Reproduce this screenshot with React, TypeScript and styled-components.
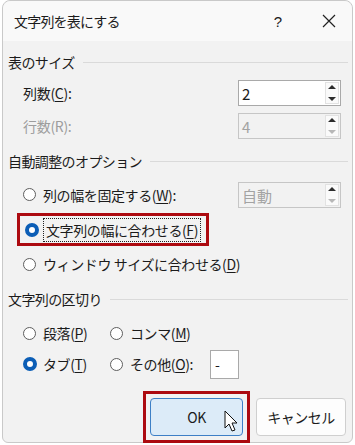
import React from "react";
import styled, { createGlobalStyle } from "styled-components";

const Global = createGlobalStyle`
  html, body { margin: 0; padding: 0; background: #ffffff; }
  body { font-family: "Noto Sans CJK JP", "Noto Sans", sans-serif; color: #1b1b1b; }
`;

const Dialog = styled.div`
  position: relative;
  box-sizing: border-box;
  margin-left: 2px;
  width: 351px;
  height: 443px;
  background: #f2f2f2;
  border: 1px solid #c9c9c9;
  border-radius: 8px 8px 6px 6px;
  display: flex;
  flex-direction: column;
`;

const TitleBar = styled.div`
  height: 40px;
  flex: none;
  display: flex;
  align-items: center;
  background: #f9f9f9;
  border-radius: 8px 8px 0 0;
  padding-left: 11px;
  font-size: 14px;
`;

const Title = styled.div`
  flex: 1;
  letter-spacing: -0.8px;
`;

const TitleButton = styled.div<{ $w: number }>`
  width: ${(p) => p.$w}px;
  height: 40px;
  display: flex;
  align-items: center;
  justify-content: center;
  font-size: 15px;
  font-family: "Liberation Sans", sans-serif;
`;

const Body = styled.div`
  padding: 0 4px 0 5px;
  display: flex;
  flex-direction: column;
`;

const Header = styled.div<{ $mt: number }>`
  margin-top: ${(p) => p.$mt}px;
  height: 22px;
  display: flex;
  align-items: center;
  font-size: 14px;
  letter-spacing: -0.6px;
  &::after {
    content: "";
    flex: 1;
    height: 1px;
    background: #dadada;
    margin-left: 8px;
  }
`;

const Row = styled.div<{ $mt: number; $h?: number; $pl?: number }>`
  margin-top: ${(p) => p.$mt}px;
  height: ${(p) => p.$h ?? 26}px;
  display: flex;
  align-items: center;
  padding-left: ${(p) => p.$pl ?? 0}px;
  padding-right: 7px;
  font-size: 14px;
`;

const Label = styled.span<{ $disabled?: boolean }>`
  flex: 1;
  color: ${(p) => (p.$disabled ? "#9d9d9d" : "#1b1b1b")};
  letter-spacing: -0.3px;
`;

const U = styled.span`
  text-decoration: underline;
  text-underline-offset: 2px;
`;

const Spin = styled.div<{ $disabled?: boolean }>`
  box-sizing: border-box;
  width: 103px;
  height: 26px;
  border: 1px solid ${(p) => (p.$disabled ? "#c6c6c6" : "#a9a9a9")};
  background: ${(p) => (p.$disabled ? "#f2f2f2" : "#ffffff")};
  display: flex;
  align-items: center;
  padding-left: 3px;
  font-size: 15px;
  color: ${(p) => (p.$disabled ? "#a3a3a3" : "#1b1b1b")};
`;

const SpinValue = styled.span`
  flex: 1;
`;

const Arrows = styled.div`
  width: 14px;
  height: 22px;
  margin-right: 1px;
  display: flex;
  flex-direction: column;
  align-items: center;
  justify-content: space-between;
  padding: 2px 0;
  box-sizing: border-box;
  border: 1px solid #e2e2e2;
  background: #fafafa;
`;

const Tri = styled.div<{ $down?: boolean; $dim?: boolean }>`
  width: 0;
  height: 0;
  border-left: 4px solid transparent;
  border-right: 4px solid transparent;
  ${(p) =>
    p.$down
      ? `border-top: 4px solid ${p.$dim ? "#b7b7b7" : "#2c2c2c"};`
      : `border-bottom: 4px solid ${p.$dim ? "#b7b7b7" : "#2c2c2c"};`}
`;

const RadioWrap = styled.span<{ $w?: number }>`
  display: inline-flex;
  align-items: center;
  width: ${(p) => (p.$w ? `${p.$w}px` : "auto")};
  flex: none;
  letter-spacing: -0.4px;
`;

const RadioDot = styled.span<{ $on?: boolean }>`
  box-sizing: border-box;
  width: ${(p) => (p.$on ? 14 : 13)}px;
  height: ${(p) => (p.$on ? 14 : 13)}px;
  border-radius: 50%;
  margin-right: ${(p) => (p.$on ? 6 : 7)}px;
  flex: none;
  border: ${(p) => (p.$on ? "4.5px solid #0c5eb6" : "1px solid #5e5e5e")};
  background: #ffffff;
`;

const Focus = styled.span`
  outline: 1px dotted #222;
  outline-offset: 1px;
  padding: 0 1px;
`;

const Highlight = styled.div<{ $mt: number }>`
  margin-top: ${(p) => p.$mt}px;
  margin-left: 9px;
  box-sizing: border-box;
  width: 192px;
  height: 33px;
  border: 3px solid #ac0a10;
  display: flex;
  align-items: center;
  padding-left: 5px;
  font-size: 14px;
`;

const SmallInput = styled.div`
  box-sizing: border-box;
  width: 29px;
  height: 29px;
  border: 1px solid #a9a9a9;
  background: #fff;
  display: flex;
  align-items: center;
  padding-left: 4px;
  font-size: 14px;
  margin-left: 17px;
`;

const Footer = styled.div`
  margin-top: 13px;
  display: flex;
  justify-content: flex-end;
  align-items: center;
  padding-right: 6px;
  gap: 6px;
`;

const OkFrame = styled.div`
  position: relative;
  box-sizing: border-box;
  width: 107px;
  height: 52px;
  border: 3px solid #ac0a10;
  display: flex;
  align-items: center;
  justify-content: center;
  background: #f2f2f2;
`;

const Button = styled.div<{ $primary?: boolean }>`
  box-sizing: border-box;
  width: ${(p) => (p.$primary ? 93 : 90)}px;
  height: 38px;
  border-radius: 4px;
  display: flex;
  align-items: center;
  justify-content: center;
  font-size: 14px;
  border: 1px solid ${(p) => (p.$primary ? "#3d7fc6" : "#cfcfcf")};
  background: ${(p) => (p.$primary ? "#dcebf8" : "#fdfdfd")};
  letter-spacing: -0.5px;
`;

const Cursor = styled.svg`
  position: absolute;
  left: 78px;
  top: 16px;
`;

function Radio({ on, children, w }: { on?: boolean; children: React.ReactNode; w?: number }) {
  return (
    <RadioWrap $w={w}>
      <RadioDot $on={on} />
      {children}
    </RadioWrap>
  );
}

function SpinBox({ value, disabled }: { value: string; disabled?: boolean }) {
  return (
    <Spin $disabled={disabled}>
      <SpinValue>{value}</SpinValue>
      <Arrows>
        <Tri />
        <Tri $down $dim={disabled} />
      </Arrows>
    </Spin>
  );
}

export default function App() {
  return (
    <>
      <Global />
      <Dialog>
        <TitleBar>
          <Title>文字列を表にする</Title>
          <TitleButton $w={56}>?</TitleButton>
          <TitleButton $w={46}>
            <svg width="14" height="14" viewBox="0 0 14 14">
              <path d="M1 1 L13 13 M13 1 L1 13" stroke="#222" strokeWidth="1.2" fill="none" />
            </svg>
          </TitleButton>
        </TitleBar>
        <Body>
          <Header $mt={10}>表のサイズ</Header>
          <Row $mt={7} $pl={15}>
            <Label>
              列数(<U>C</U>):
            </Label>
            <SpinBox value="2" />
          </Row>
          <Row $mt={7} $pl={15}>
            <Label $disabled>行数(R):</Label>
            <SpinBox value="4" disabled />
          </Row>
          <Header $mt={11}>自動調整のオプション</Header>
          <Row $mt={10} $pl={15}>
            <Label>
              <Radio>
                列の幅を固定する(<U>W</U>):
              </Radio>
            </Label>
            <SpinBox value="自動" disabled />
          </Row>
          <Highlight $mt={5}>
            <Radio on>
              <Focus>
                文字列の幅に合わせる(<U>F</U>)
              </Focus>
            </Radio>
          </Highlight>
          <Row $mt={5} $pl={15}>
            <Radio>
              ウィンドウ サイズに合わせる(<U>D</U>)
            </Radio>
          </Row>
          <Header $mt={11}>文字列の区切り</Header>
          <Row $mt={10} $pl={15}>
            <Radio w={87}>
              段落(<U>P</U>)
            </Radio>
            <Radio>
              コンマ(<U>M</U>)
            </Radio>
          </Row>
          <Row $mt={4} $h={28} $pl={15}>
            <Radio on w={87}>
              タブ(<U>T</U>)
            </Radio>
            <Radio>
              その他(<U>O</U>):
            </Radio>
            <SmallInput>-</SmallInput>
          </Row>
        </Body>
        <Footer>
          <OkFrame>
            <Button $primary>OK</Button>
            <Cursor width="16" height="24" viewBox="0 0 16 24">
              <path
                d="M1 1 L1 18 L5 14 L8 21 L11 20 L8 13 L13 13 Z"
                fill="#ffffff"
                stroke="#111"
                strokeWidth="1"
                strokeLinejoin="round"
              />
            </Cursor>
          </OkFrame>
          <Button>キャンセル</Button>
        </Footer>
      </Dialog>
    </>
  );
}
